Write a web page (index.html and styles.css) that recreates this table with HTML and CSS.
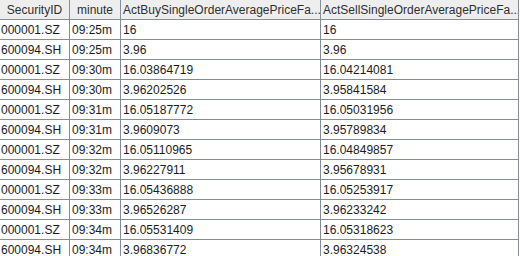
FILE: index.html
```html
<!DOCTYPE html>
<html>
<head>
<meta charset="utf-8">
<link rel="stylesheet" href="styles.css">
</head>
<body>
<div class="grid">
  <div class="row head">
    <div class="cell c1">SecurityID</div>
    <div class="cell c2">minute</div>
    <div class="cell c3">ActBuySingleOrderAveragePriceFa...</div>
    <div class="cell c4">ActSellSingleOrderAveragePriceFa...</div>
  </div>
  <div class="row"><div class="cell c1">000001.SZ</div><div class="cell c2">09:25m</div><div class="cell c3">16</div><div class="cell c4">16</div></div>
  <div class="row"><div class="cell c1">600094.SH</div><div class="cell c2">09:25m</div><div class="cell c3">3.96</div><div class="cell c4">3.96</div></div>
  <div class="row"><div class="cell c1">000001.SZ</div><div class="cell c2">09:30m</div><div class="cell c3">16.03864719</div><div class="cell c4">16.04214081</div></div>
  <div class="row"><div class="cell c1">600094.SH</div><div class="cell c2">09:30m</div><div class="cell c3">3.96202526</div><div class="cell c4">3.95841584</div></div>
  <div class="row"><div class="cell c1">000001.SZ</div><div class="cell c2">09:31m</div><div class="cell c3">16.05187772</div><div class="cell c4">16.05031956</div></div>
  <div class="row"><div class="cell c1">600094.SH</div><div class="cell c2">09:31m</div><div class="cell c3">3.9609073</div><div class="cell c4">3.95789834</div></div>
  <div class="row"><div class="cell c1">000001.SZ</div><div class="cell c2">09:32m</div><div class="cell c3">16.05110965</div><div class="cell c4">16.04849857</div></div>
  <div class="row"><div class="cell c1">600094.SH</div><div class="cell c2">09:32m</div><div class="cell c3">3.96227911</div><div class="cell c4">3.95678931</div></div>
  <div class="row"><div class="cell c1">000001.SZ</div><div class="cell c2">09:33m</div><div class="cell c3">16.05436888</div><div class="cell c4">16.05253917</div></div>
  <div class="row"><div class="cell c1">600094.SH</div><div class="cell c2">09:33m</div><div class="cell c3">3.96526287</div><div class="cell c4">3.96233242</div></div>
  <div class="row"><div class="cell c1">000001.SZ</div><div class="cell c2">09:34m</div><div class="cell c3">16.05531409</div><div class="cell c4">16.05318623</div></div>
  <div class="row"><div class="cell c1">600094.SH</div><div class="cell c2">09:34m</div><div class="cell c3">3.96836772</div><div class="cell c4">3.96324538</div></div>
</div>
</body>
</html>
```
FILE: styles.css
```css
html, body {
  margin: 0;
  padding: 0;
  background: #ffffff;
}
.grid {
  width: 519px;
  font-family: "Liberation Sans", Arial, sans-serif;
  font-size: 12px;
  color: #1c1c1c;
}
.row {
  display: flex;
  height: 20px;
}
.cell {
  box-sizing: border-box;
  height: 100%;
  border-right: 1px solid #838e9a;
  border-bottom: 1px solid #838e9a;
  padding-left: 2px;
  white-space: nowrap;
  overflow: hidden;
  display: flex;
  align-items: center;
}
.c1 { width: 70px; padding-left: 1px; }
.c2 { width: 51px; }
.c3 { width: 200px; }
.c4 { width: 198px; }
.head .cell {
  background: #eeeeee;
  color: #2e2e2e;
  justify-content: center;
  padding-left: 0;
}
.head .c3, .head .c4 {
  justify-content: flex-start;
  padding-left: 2px;
}
```
